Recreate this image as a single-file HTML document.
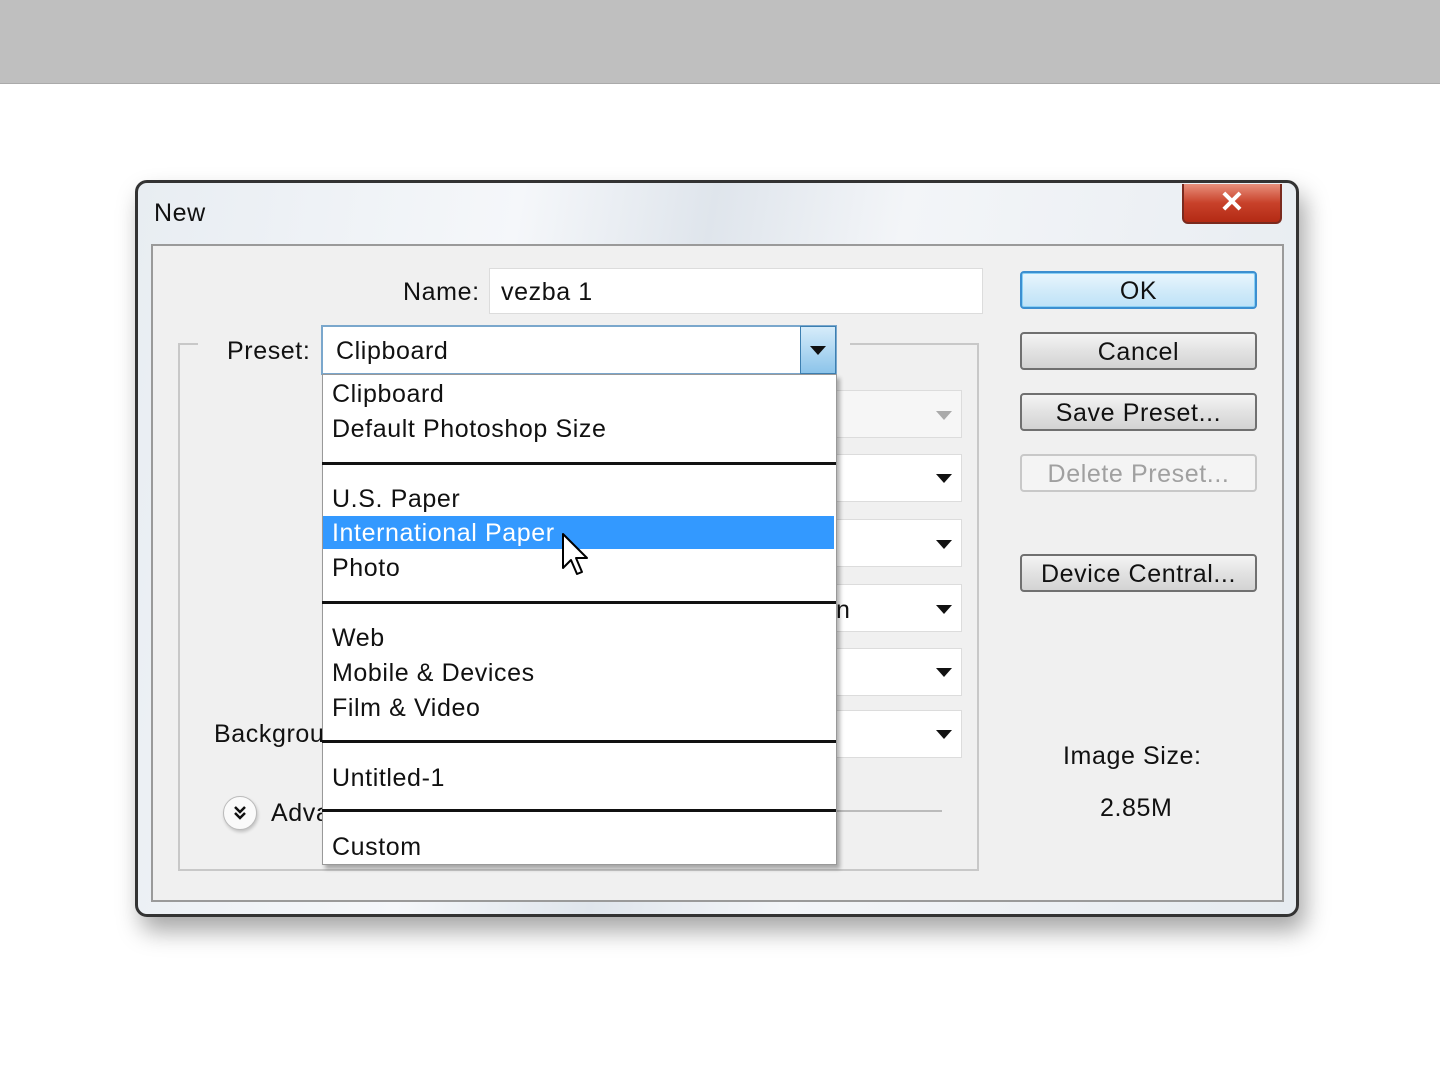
<!DOCTYPE html>
<html><head><meta charset="utf-8"><style>
*{margin:0;padding:0;box-sizing:border-box}
body{width:1440px;height:1080px;background:#fff;position:relative;overflow:hidden;font-family:"Liberation Sans",sans-serif;color:#111}
.a{position:absolute}
.t{position:absolute;font-size:25px;white-space:nowrap;line-height:30px;letter-spacing:0.6px}
.btn{position:absolute;left:1020px;width:237px;height:38px;border:2px solid #707070;border-radius:4px;background:linear-gradient(#f4f4f4,#e2e2e2 50%,#d3d3d3);font-size:25px;text-align:center;line-height:37px;letter-spacing:0.6px}
.fld{position:absolute;background:#fff;border:1px solid #dcdcdc}
.arr{position:absolute;width:0;height:0;border-left:8px solid transparent;border-right:8px solid transparent;border-top:9px solid #111}
.sep{position:absolute;left:322px;width:514px;height:3px;background:#111}
</style></head><body>
<div class="a" style="left:0;top:0;width:1440px;height:84px;background:#bfbfbf;border-bottom:1px solid #aaa"></div>
<div class="a" style="left:135px;top:180px;width:1164px;height:737px;border:3px solid #333;border-radius:12px;background:linear-gradient(100deg,#e8edf2 0%,#f5f7fa 30%,#dfe5ec 45%,#f3f5f8 60%,#e6ebf0 100%);box-shadow:6px 14px 24px rgba(0,0,0,.35)"></div>
<div class="t" style="left:154px;top:198px">New</div>
<div class="a" style="left:1182px;top:184px;width:100px;height:40px;border:2px solid #7a2a1e;border-top:none;border-radius:0 0 6px 6px;background:linear-gradient(#e8907c,#c8412a 50%,#b32a14)"></div>
<div class="a" style="left:1182px;top:184px;width:100px;height:38px;color:#fff;font-size:30px;font-weight:bold;text-align:center;line-height:38px">✕</div>
<div class="a" style="left:151px;top:244px;width:1133px;height:658px;background:#f0f0f0;border:2px solid #9a9a9a"></div>
<div class="a" style="left:178px;top:343px;width:801px;height:528px;border:2px solid #c8c8c8;border-top:none"></div>
<div class="a" style="left:178px;top:343px;width:20px;height:2px;background:#c8c8c8"></div>
<div class="a" style="left:850px;top:343px;width:129px;height:2px;background:#c8c8c8"></div>
<div class="t" style="left:403px;top:277px">Name:</div>
<div class="fld" style="left:489px;top:268px;width:494px;height:46px"></div>
<div class="t" style="left:501px;top:277px">vezba 1</div>
<div class="t" style="left:227px;top:336px">Preset:</div>
<div class="a" style="left:321px;top:325px;width:516px;height:50px;background:#fff;border:2px solid #7aa7cc"></div>
<div class="t" style="left:336px;top:336px">Clipboard</div>
<div class="a" style="left:800px;top:326px;width:36px;height:48px;background:linear-gradient(#d6ecfa,#8cc4ea);border:1px solid #3c7fb1"></div>
<div class="arr" style="left:810px;top:346px"></div>
<div class="fld" style="left:836px;top:390px;width:126px;height:48px;background:#f6f6f6"></div>
<div class="arr" style="left:936px;top:411px;border-top-color:#aaa"></div>
<div class="fld" style="left:836px;top:454px;width:126px;height:48px"></div><div class="arr" style="left:936px;top:474px"></div>
<div class="fld" style="left:836px;top:519px;width:126px;height:48px"></div><div class="arr" style="left:936px;top:540px"></div>
<div class="fld" style="left:836px;top:584px;width:126px;height:48px"></div><div class="arr" style="left:936px;top:605px"></div>
<div class="t" style="left:836px;top:595px">n</div>
<div class="fld" style="left:836px;top:648px;width:126px;height:48px"></div><div class="arr" style="left:936px;top:668px"></div>
<div class="fld" style="left:836px;top:710px;width:126px;height:48px"></div><div class="arr" style="left:936px;top:730px"></div>
<div class="a" style="left:836px;top:810px;width:106px;height:2px;background:#bbb"></div>
<div class="t" style="left:214px;top:719px">Background</div>
<div class="a" style="left:223px;top:796px;width:34px;height:34px;border-radius:50%;background:#fafafa;border:1px solid #bbb;box-shadow:1px 2px 3px rgba(0,0,0,.2)"></div>
<svg class="a" style="left:230px;top:803px" width="20" height="20" viewBox="0 0 20 20"><path d="M5 4 L10 9 L15 4 M5 10 L10 15 L15 10" fill="none" stroke="#111" stroke-width="2.5"/></svg>
<div class="t" style="left:271px;top:798px">Advanced</div>
<div class="a" style="left:322px;top:374px;width:515px;height:491px;background:#fff;border:1px solid #999;box-shadow:3px 4px 4px rgba(0,0,0,.3)"></div>
<div class="t" style="left:332px;top:379px">Clipboard</div>
<div class="t" style="left:332px;top:414px">Default Photoshop Size</div>
<div class="sep" style="top:462px"></div>
<div class="t" style="left:332px;top:484px">U.S. Paper</div>
<div class="a" style="left:323px;top:516px;width:511px;height:33px;background:#3399ff"></div>
<div class="t" style="left:332px;top:518px;color:#fff">International Paper</div>
<div class="t" style="left:332px;top:553px">Photo</div>
<div class="sep" style="top:601px"></div>
<div class="t" style="left:332px;top:623px">Web</div>
<div class="t" style="left:332px;top:658px">Mobile &amp; Devices</div>
<div class="t" style="left:332px;top:693px">Film &amp; Video</div>
<div class="sep" style="top:740px"></div>
<div class="t" style="left:332px;top:763px">Untitled-1</div>
<div class="sep" style="top:809px"></div>
<div class="t" style="left:332px;top:832px">Custom</div>
<svg class="a" style="left:560px;top:532px" width="32" height="46" viewBox="0 0 32 46"><path d="M3 2 L3 36 L11 28 L17 42 L22 40 L16 26 L27 26 Z" fill="#fff" stroke="#000" stroke-width="2" stroke-linejoin="round"/></svg>
<div class="btn" style="top:271px;border-color:#3c8fd0;box-shadow:0 0 0 1px #8ad0f5 inset;background:linear-gradient(#eaf6fd,#d2ebf9 50%,#bee2f7)">OK</div>
<div class="btn" style="top:332px">Cancel</div>
<div class="btn" style="top:393px">Save Preset...</div>
<div class="btn" style="top:454px;border-color:#c8c8c8;background:#f4f4f4;color:#a0a0a0">Delete Preset...</div>
<div class="btn" style="top:554px">Device Central...</div>
<div class="t" style="left:1063px;top:741px">Image Size:</div>
<div class="t" style="left:1100px;top:793px">2.85M</div>
</body></html>
